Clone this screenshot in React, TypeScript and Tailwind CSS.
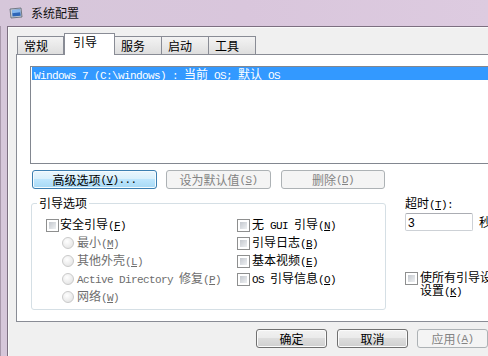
import React from "react";

const MONO =
  "font-['Liberation_Mono',monospace] text-[11px] tracking-[-0.6px] whitespace-pre";

function renderAmp(p: string) {
  const out: React.ReactNode[] = [];
  let buf = "";
  for (let i = 0; i < p.length; i++) {
    if (p[i] === "&" && i + 1 < p.length) {
      if (buf) {
        out.push(buf);
        buf = "";
      }
      out.push(
        <span key={i} className="underline underline-offset-[1px]">
          {p[i + 1]}
        </span>
      );
      i++;
    } else buf += p[i];
  }
  if (buf) out.push(buf);
  return out;
}

function T({ s }: { s: string }) {
  const parts = s.split(/([\x20-\x7e]+)/).filter(Boolean);
  return (
    <>
      {parts.map((p, i) =>
        /^[\x20-\x7e]+$/.test(p) ? (
          <span key={i} className={MONO}>
            {renderAmp(p)}
          </span>
        ) : (
          <span key={i}>{p}</span>
        )
      )}
    </>
  );
}

function Check() {
  return (
    <span className="w-[13px] h-[13px] shrink-0 border border-[#8e8f8f] bg-white p-[2px] flex">
      <span className="flex-1 bg-[linear-gradient(135deg,#c4c8ce,#eef0f2)]" />
    </span>
  );
}

function Radio() {
  return (
    <span className="w-[12px] h-[12px] shrink-0 rounded-full border border-[#cacaca] bg-[radial-gradient(circle_at_40%_35%,#ffffff,#dedede)]" />
  );
}

const btnBase =
  "h-[19px] shrink-0 flex items-center justify-center rounded-[3px] border";
const btnNormal =
  "border-[#707070] bg-[linear-gradient(#f2f2f2,#ebebeb_45%,#dddddd_50%,#cfcfcf)] shadow-[inset_0_0_0_1px_#fbfbfb]";
const btnFocus =
  "border-[#3c7fb1] bg-[linear-gradient(#eaf6fd,#d9f0fc_45%,#bee6fd_50%,#a7d9f5)] shadow-[inset_0_0_0_1px_#f5fbfe]";
const btnDisabled = "border-[#adb2b5] bg-[#f4f4f4] text-[#838383]";

function Tab({ label, selected, first }: { label: string; selected?: boolean; first?: boolean }) {
  if (selected) {
    return (
      <div className="relative z-10 -mb-px h-[22px] w-[51px] bg-white border border-b-0 border-[#898c95] pl-[8px] pt-[1px]">
        {label}
      </div>
    );
  }
  return (
    <div
      className={
        "h-[18px] w-[47px] border-t border-r border-[#898c95] bg-[linear-gradient(#f3f3f3,#e9e9e9_50%,#dedede)] pl-[6px] pt-[2px] " +
        (first ? "border-l" : "")
      }
    >
      {label}
    </div>
  );
}

export default function App() {
  return (
    <div className="w-[488px] h-[356px] overflow-hidden flex flex-col bg-[linear-gradient(90deg,#d6c7da,#d9c6dc_50%,#ddcbe0)] font-['Noto_Sans_CJK_SC','Noto_Sans',sans-serif] text-[12px] leading-[14px] text-black">
      {/* title bar */}
      <div className="h-[26px] shrink-0 flex items-center pl-[9px] gap-[8px]">
        <svg width="14" height="13" viewBox="0 0 14 13">
          <path d="M1 2 L12 1 L13 10 L2 11 Z" fill="#c3ccd6" stroke="#5b6470" strokeWidth="0.8" />
          <path d="M3 3 L11 2.5 L11.8 8.8 L3.5 9.5 Z" fill="#2d66b8" />
          <path d="M3 3 L11 2.5 L11.3 5.2 L3.2 6.2 Z" fill="#86b8ee" />
        </svg>
        <span className="text-[#111]">系统配置</span>
      </div>

      <div className="flex flex-1">
        <div className="w-[7px] shrink-0 border-l border-[#a898ab]" />
        <div className="flex-1 flex flex-col bg-[#f0f0f0] border-l border-t border-[#7c6f80] shadow-[inset_1px_1px_0_#fafafa] pt-[6px] pl-[8px]">
          {/* tabs */}
          <div className="flex items-end h-[21px] pl-[1px]">
            <Tab label="常规" first />
            <Tab label="引导" selected />
            <Tab label="服务" />
            <Tab label="启动" />
            <Tab label="工具" />
          </div>

          {/* panel */}
          <div className="w-[540px] h-[268px] shrink-0 border border-[#898c95] bg-white flex flex-col">
            <div className="ml-[13px] mt-[11px] w-[480px] h-[98px] shrink-0 border border-[#828790] bg-white pl-[1px] pt-[0px]">
              <div className="h-[13px] bg-[#3399ff] text-white leading-[13px] pl-[2px] whitespace-nowrap">
                <T s={"Windows 7 (C:\\windows) : 当前 OS; 默认 OS"} />
              </div>
            </div>

            <div className="flex ml-[15px] mt-[6px]">
              <div className={btnBase + " " + btnFocus + " w-[125px]"}>
                <T s="高级选项(&V)..." />
              </div>
              <div className={btnBase + " " + btnDisabled + " w-[105px] ml-[9px]"}>
                <T s="设为默认值(&S)" />
              </div>
              <div className={btnBase + " " + btnDisabled + " w-[104px] ml-[10px]"}>
                <T s="删除(&D)" />
              </div>
            </div>

            <div className="flex mt-[7px] ml-[14px]">
              <fieldset className="w-[355px] h-[114px] shrink-0 border border-[#d5dfe5] rounded-[3px]">
                <legend className="ml-[5px] px-[2px] leading-[14px]">引导选项</legend>
                <div className="flex mt-[6px]">
                  <div className="w-[191px] ml-[14px] flex flex-col">
                    <div className="h-[18px] flex items-center gap-[1px]">
                      <Check />
                      <span>
                        <T s="安全引导(&F)" />
                      </span>
                    </div>
                    {["最小(&M)", "其他外壳(&L)", "Active Directory 修复(&P)", "网络(&W)"].map((s) => (
                      <div key={s} className="h-[18px] flex items-center gap-[3px] pl-[16px] text-[#6d6d6d]">
                        <Radio />
                        <span>
                          <T s={s} />
                        </span>
                      </div>
                    ))}
                  </div>
                  <div className="flex flex-col">
                    {["无 GUI 引导(&N)", "引导日志(&B)", "基本视频(&E)", "OS 引导信息(&O)"].map((s) => (
                      <div key={s} className="h-[18px] flex items-center gap-[2px]">
                        <Check />
                        <span>
                          <T s={s} />
                        </span>
                      </div>
                    ))}
                  </div>
                </div>
              </fieldset>

              <div className="ml-[19px] flex flex-col shrink-0">
                <div>
                  <T s="超时(&T):" />
                </div>
                <div className="flex items-center mt-[1px]">
                  <div className="w-[68px] h-[18px] border border-[#cdd1d6] border-t-[#abadb3] rounded-[2px] bg-white pl-[2px] leading-[16px]">
                    <span className="font-['Liberation_Sans',sans-serif] text-[12px]">3</span>
                  </div>
                  <span className="ml-[6px]">秒</span>
                </div>
                <div className="flex items-start mt-[39px] gap-[2px]">
                  <div className="mt-[2px]">
                    <Check />
                  </div>
                  <div className="w-[140px] leading-[13px]">
                    <T s="使所有引导设置成为永久设置(&K)" />
                  </div>
                </div>
              </div>
            </div>
          </div>

          {/* bottom buttons */}
          <div className="flex mt-[7px] ml-[240px]">
            <div className={btnBase + " " + btnNormal + " w-[71px]"}>确定</div>
            <div className={btnBase + " " + btnNormal + " w-[71px] ml-[10px]"}>取消</div>
            <div className={btnBase + " " + btnDisabled + " w-[71px] ml-[9px]"}>
              <T s="应用(&A)" />
            </div>
          </div>
        </div>
      </div>
    </div>
  );
}
